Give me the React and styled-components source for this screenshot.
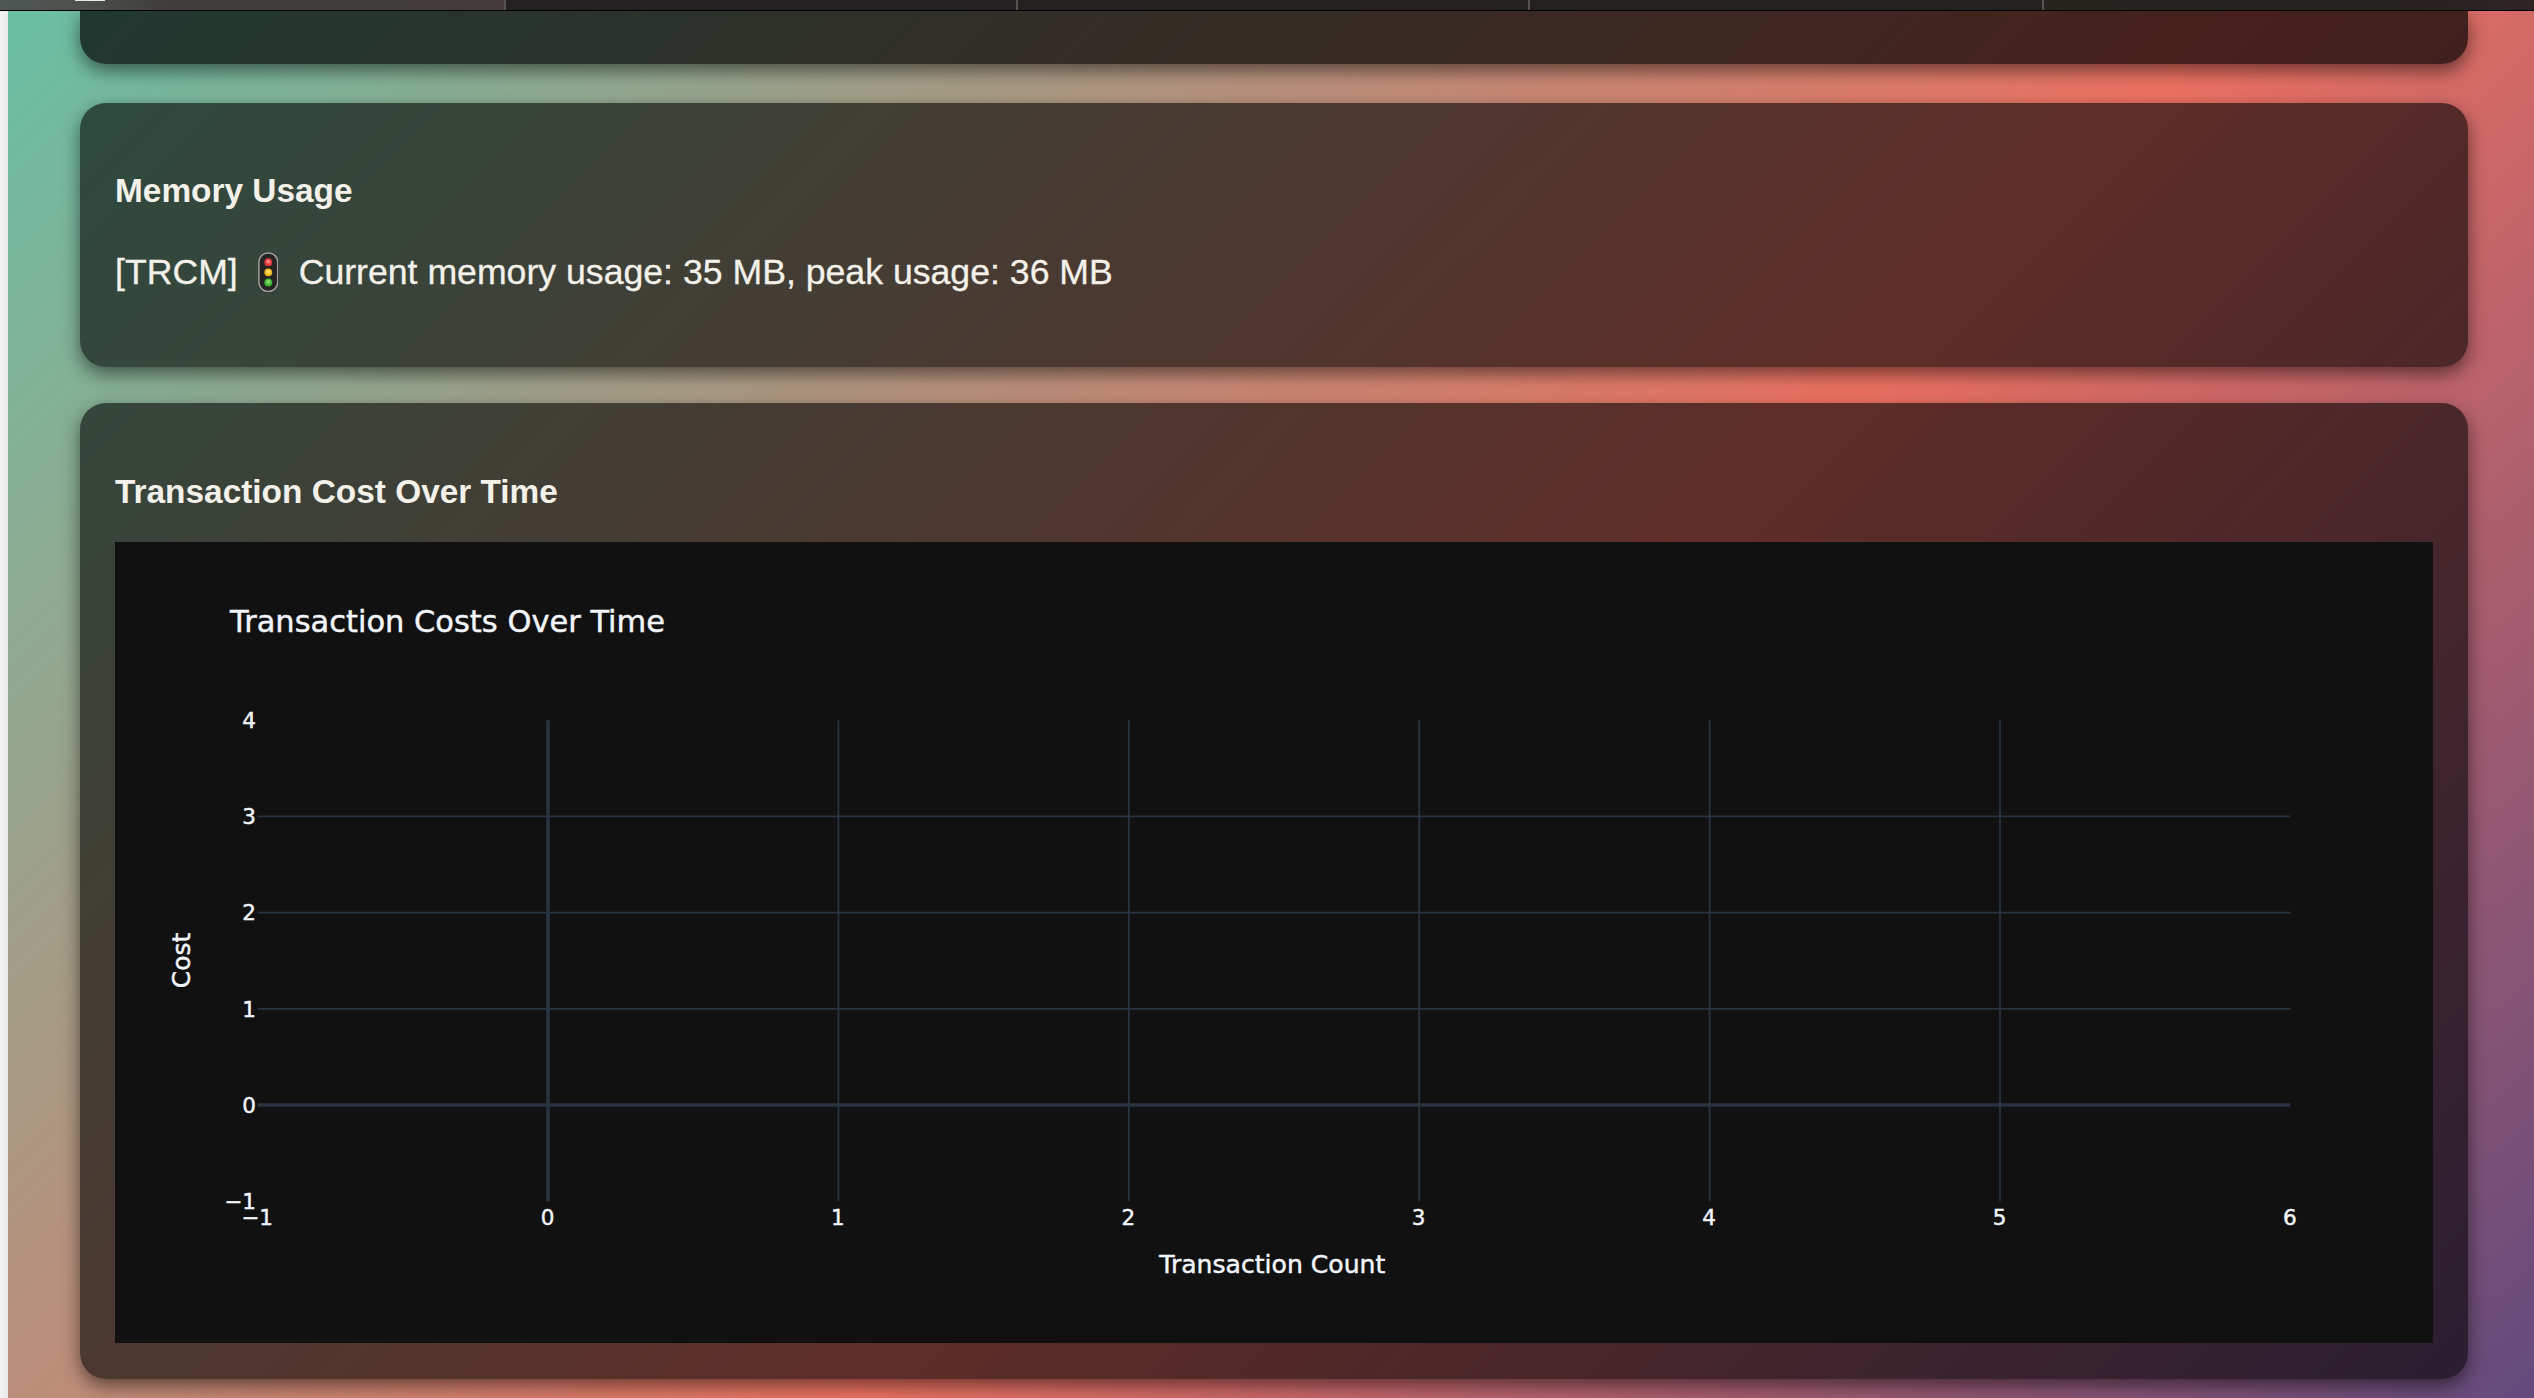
import React from "react";
import styled, { createGlobalStyle } from "styled-components";

const Global = createGlobalStyle`
  *, *::before, *::after { box-sizing: border-box; }
  html, body { margin: 0; padding: 0; height: 100%; overflow: hidden; background: #f0f0f0; }
`;

const Window = styled.div`
  height: 1398px;
  width: 100%;
  display: flex;
  flex-direction: column;
  overflow: hidden;
  font-family: "Liberation Sans", Arial, sans-serif;
`;

const TabStrip = styled.div`
  flex: none;
  height: 11px;
  display: grid;
  grid-template-columns: 506px 512px 512px 514px 1fr;
  border-bottom: 1px solid #000;
`;

const Tab = styled.div`
  background: ${(p) => p.$fill};
  border-right: ${(p) => (p.$last ? "none" : "2px solid #5a5251")};
  padding-left: 75px;
`;

const Favicon = styled.div`
  width: 30px;
  height: 1px;
  background: #e4ebe7;
`;

const Body = styled.div`
  flex: 1;
  min-height: 0;
  display: flex;
`;

const Gutter = styled.div`
  width: 8px;
  background: linear-gradient(90deg, #f2f2f2, #e9e9e9);
`;

const Main = styled.main`
  flex: 1;
  min-width: 0;
  padding: 0 66px 0 71.5px;
  display: flex;
  flex-direction: column;
  gap: 36px;
  overflow: hidden;
  background: linear-gradient(135deg, #6ac0a4 0%, #ec7161 57%, #634a7c 100%);
`;

const Card = styled.section`
  flex: none;
  height: ${(p) => p.$h}px;
  padding: 0 35.5px;
  border-radius: ${(p) => (p.$cut ? "0 0 26px 26px" : "26px")};
  margin-bottom: ${(p) => (p.$cut ? 3 : 0)}px;
  background: rgba(0, 0, 0, ${(p) => (p.$cut ? 0.7 : 0.6)});
  box-shadow: 0 7px 18px rgba(0, 0, 0, 0.5);
`;

const Title = styled.h3`
  margin: 0;
  padding-top: ${(p) => p.$top}px;
  font-size: 33.4px;
  line-height: 38px;
  font-weight: 700;
  color: #f3f1ea;
`;

const Usage = styled.p`
  margin: 0;
  padding-top: 38px;
  display: flex;
  align-items: center;
  font-size: 35.65px;
  line-height: 48px;
  color: #f3f1ea;
  -webkit-text-stroke: 0.3px #f3f1ea;
  white-space: pre;
`;

const Light = styled.svg`
  flex: none;
  width: 20.6px;
  height: 40.4px;
  margin: 0 20.3px 0 20px;
`;

const Plot = styled.div`
  margin-top: 31px;
  height: 801px;
  background: #111;
`;

const Chart = styled.svg`
  display: block;
  width: 100%;
  height: 100%;
  overflow: visible;
  font-family: "DejaVu Sans", Verdana, sans-serif;
  fill: #f2f5fa;

  text {
    stroke: #f2f5fa;
    stroke-width: 0.45px;
  }
`;

const LEFT = 115;
const TOP = 542;
const x = (v) => 548 - LEFT + v * 290.4;
const y = (v) => 1105 - TOP - v * 96.2;
const label = (v) => (v < 0 ? `−${-v}` : `${v}`);

function CostChart() {
  return (
    <Chart>
      <g stroke="#283442">
        {[1, 2, 3, 4, 5].map((v) => (
          <line key={v} x1={x(v)} x2={x(v)} y1={y(4)} y2={y(-1)} strokeWidth="1.8" />
        ))}
        {[1, 2, 3].map((v) => (
          <line key={v} x1={x(-1)} x2={x(6)} y1={y(v)} y2={y(v)} strokeWidth="1.8" />
        ))}
        <line x1={x(-1)} x2={x(6)} y1={y(0)} y2={y(0)} strokeWidth="3.6" />
        <line x1={x(0)} x2={x(0)} y1={y(4)} y2={y(-1)} strokeWidth="3.6" />
      </g>
      <text x={115} y={632 - TOP} fontSize="30.6" textLength="435" lengthAdjust="spacingAndGlyphs">
        Transaction Costs Over Time
      </text>
      <g fontSize="21.5" textAnchor="end">
        {[-1, 0, 1, 2, 3, 4].map((v) => (
          <text key={v} x={256 - LEFT} y={y(v) + 7.8}>{label(v)}</text>
        ))}
      </g>
      <g fontSize="21.5" textAnchor="middle">
        {[-1, 0, 1, 2, 3, 4, 5, 6].map((v) => (
          <text key={v} x={x(v) - 0.5} y={1225 - TOP}>{label(v)}</text>
        ))}
      </g>
      <text x={1272.3 - LEFT} y={1272.7 - TOP} fontSize="25" textAnchor="middle" textLength="226" lengthAdjust="spacingAndGlyphs">
        Transaction Count
      </text>
      <text transform={`translate(${190 - LEFT} ${960.5 - TOP}) rotate(-90)`} fontSize="25" textAnchor="middle">
        Cost
      </text>
    </Chart>
  );
}

function TrafficLight() {
  return (
    <Light viewBox="0 0 20.6 40.4">
      <rect x="0.9" y="0.9" width="18.8" height="38.6" rx="9.2" fill="#262324" stroke="#a09d9b" strokeWidth="1.5" />
      <circle cx="10.3" cy="10.2" r="3.9" fill="#e23c42" />
      <circle cx="10.3" cy="9.6" r="1.9" fill="#f58a86" />
      <circle cx="10.3" cy="20.3" r="3.9" fill="#efb926" />
      <circle cx="10.3" cy="19.8" r="1.9" fill="#fbe466" />
      <circle cx="10.3" cy="30.4" r="3.9" fill="#3fb834" />
      <circle cx="10.3" cy="29.9" r="1.9" fill="#86e070" />
    </Light>
  );
}

const active = "linear-gradient(90deg, #4f5653 0%, #4e524f 14%, #403e3b 33%, #403d3a 75%, #443a3a 100%)";

export default function App() {
  return (
    <Window>
      <Global />
      <TabStrip>
        <Tab $fill={active}><Favicon /></Tab>
        <Tab $fill="#232122" />
        <Tab $fill="#252120" />
        <Tab $fill="#242120" />
        <Tab $fill="linear-gradient(90deg, #26221e 0%, #25211e 70%, #2f2425 100%)" $last />
      </TabStrip>
      <Body>
        <Gutter />
        <Main>
          <Card $h={53} $cut />
          <Card $h={264}>
            <Title $top={69}>Memory Usage</Title>
            <Usage>[TRCM]<TrafficLight />Current memory usage: 35 MB, peak usage: 36 MB</Usage>
          </Card>
          <Card $h={976}>
            <Title $top={70}>Transaction Cost Over Time</Title>
            <Plot><CostChart /></Plot>
          </Card>
        </Main>
      </Body>
    </Window>
  );
}
